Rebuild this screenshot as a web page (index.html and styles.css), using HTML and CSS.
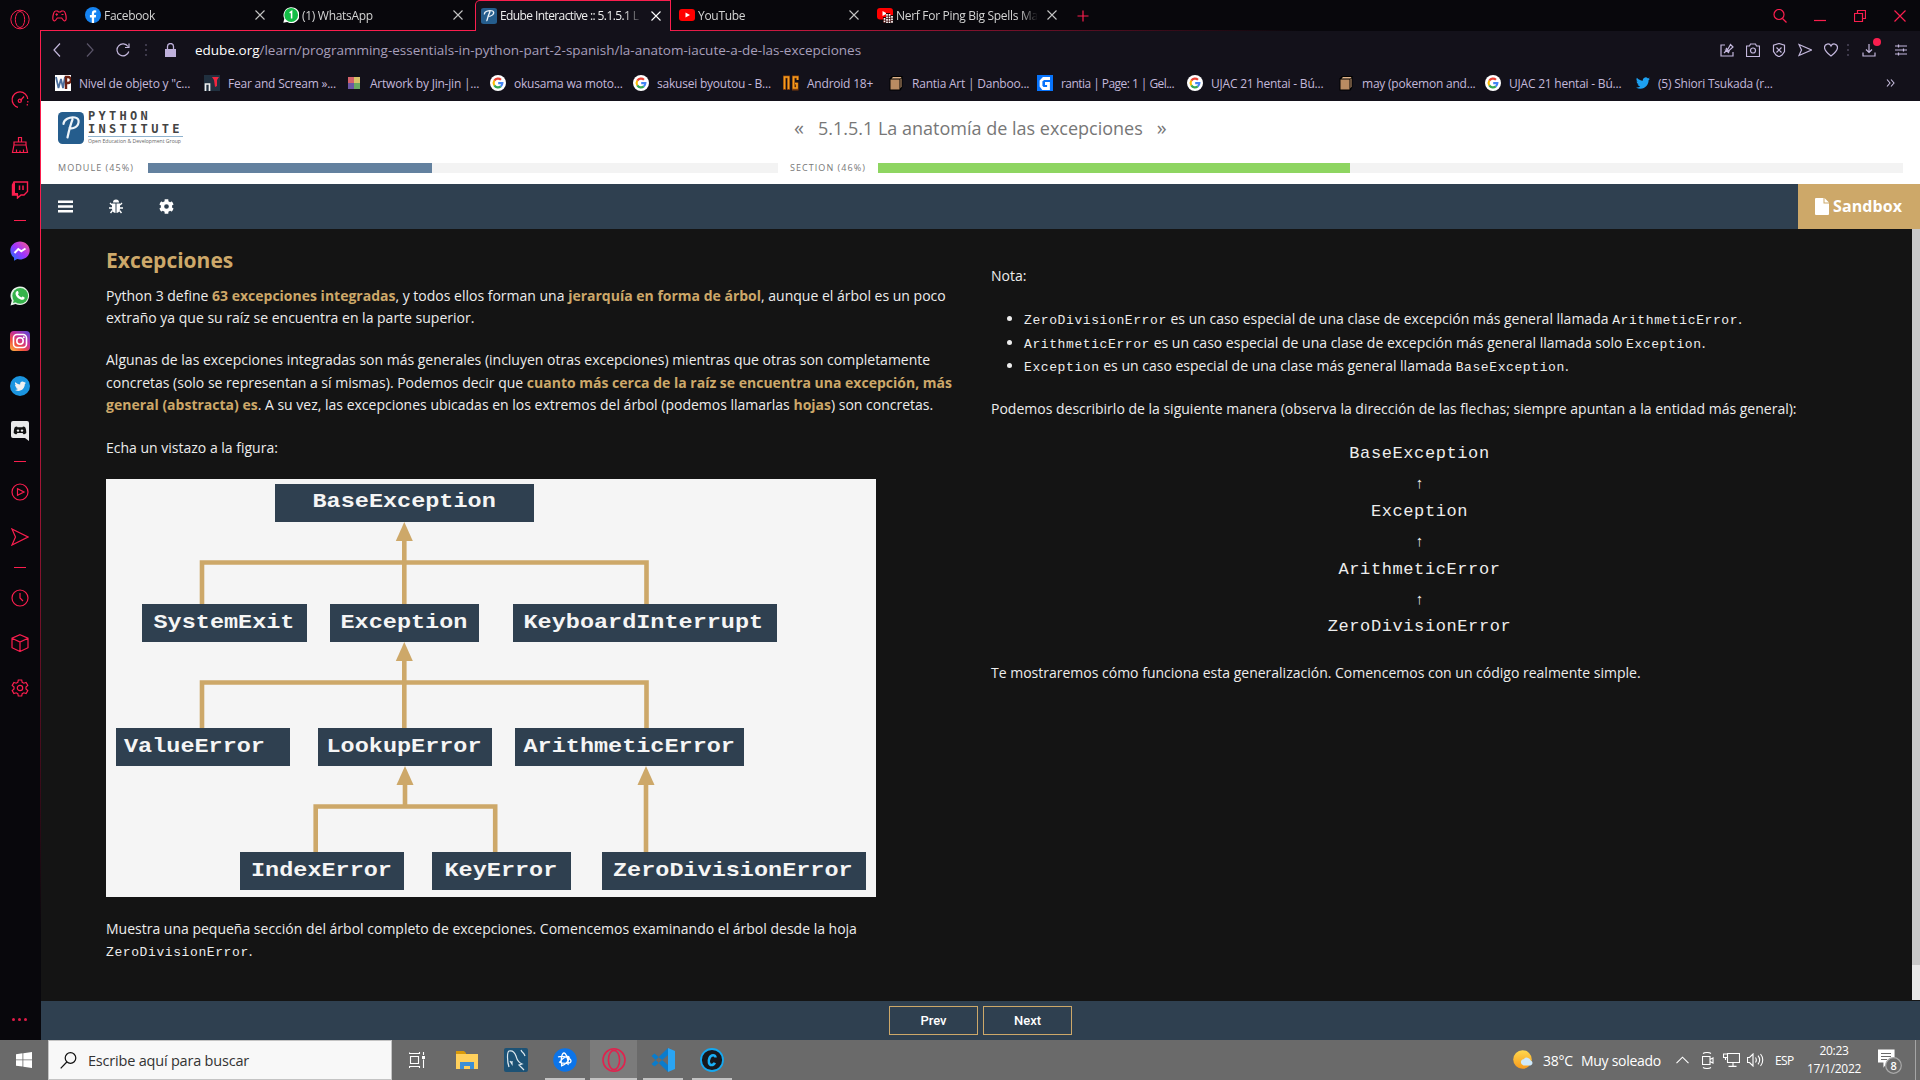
FILE: index.html
```html
<!DOCTYPE html>
<html lang="es">
<head>
<meta charset="utf-8">
<title>Edube Interactive :: 5.1.5.1 La anatomía de las excepciones</title>
<link rel="stylesheet" href="styles.css">
</head>
<body>
<svg class="defs" width="0" height="0">
  <symbol id="x" viewBox="0 0 12 12"><path d="M1.5 1.5l9 9M10.5 1.5l-9 9" fill="none" stroke="currentColor" stroke-width="1.1"/></symbol>
  <symbol id="opera" viewBox="0 0 24 24"><ellipse cx="12" cy="12" rx="11" ry="11.2"/><ellipse cx="12" cy="12" rx="5.6" ry="9.6"/></symbol>
  <symbol id="google" viewBox="0 0 16 16"><circle cx="8" cy="8" r="8" fill="#fff"/><g fill="none" stroke-width="2.1"><path d="M4.3 5.6A4.4 4.4 0 0 1 11 4.8" stroke="#ea4335"/><path d="M4.3 10.4a4.6 4.6 0 0 1 0-4.8" stroke="#fbbc05"/><path d="M4.3 10.4a4.4 4.4 0 0 0 6.5 1" stroke="#34a853"/><path d="M8.2 8.1h4.2a4.4 4.4 0 0 1-1.6 3.3" stroke="#4285f4"/></g></symbol>
  <symbol id="box" viewBox="0 0 16 16"><path d="M1.500 3.500L4 1h10.500v11l-2 3.500h-11z" fill="#000"/><path d="M3.500 3.500L5 2h8.500L12.500 3.500z" fill="#e0b48a"/><path d="M2.500 4.500h9v10h-9z" fill="#b98b62"/><path d="M12.500 4.500l1-1.300v8.600l-1 1.500z" fill="#cfa076"/></symbol>
  <symbol id="bird" viewBox="0 0 24 24"><path d="M23.950 4.570a10 10 0 0 1-2.820.770 4.960 4.960 0 0 0 2.160-2.720c-.950.550-2 .950-3.130 1.180a4.920 4.920 0 0 0-8.380 4.480C7.690 8.090 4.070 6.130 1.640 3.160a4.900 4.900 0 0 0 1.520 6.570 4.900 4.900 0 0 1-2.230-.610v.060a4.920 4.920 0 0 0 3.950 4.830 5 5 0 0 1-2.210.080 4.940 4.940 0 0 0 4.600 3.420A9.870 9.870 0 0 1 0 19.540a14 14 0 0 0 7.550 2.210c9.050 0 14-7.500 14-13.980 0-.210 0-.420-.020-.630a9.900 9.900 0 0 0 2.420-2.570z"/></symbol>
  <symbol id="gear" viewBox="0 0 512 512"><path d="M487 316l-43-25c4-23 4-47 0-70l43-25c5-3 7-9 6-14-11-36-30-69-55-96-4-4-10-5-15-2l-43 24a190 190 0 0 0-60-34V24c0-6-4-10-9-12a245 245 0 0 0-111 0c-5 2-9 6-9 12v50c-22 8-43 20-60 34L88 84c-5-3-11-2-15 2-25 27-44 60-55 96-2 5 1 11 5 14l43 25c-4 23-4 47 0 70l-43 25c-4 3-7 9-5 14 11 36 30 69 55 96 4 4 10 5 15 2l43-24c17 14 38 26 60 34v50c0 6 4 10 9 12 36 8 74 8 111 0 5-2 9-6 9-12v-50c22-8 43-20 60-34l43 24c5 3 11 2 15-2 25-27 44-60 55-96 1-5-1-11-6-14zM256 336a80 80 0 1 1 0-160 80 80 0 0 1 0 160z"/></symbol>
  <symbol id="plogo" viewBox="0 0 26 32"><rect width="26" height="32" rx="4.500" fill="#255d8d"/><path d="M5.500 12c0-4.500 6-7.500 11.500-6.500 5.500 1 4.500 8.500-1.500 10.500-1.500.500-3 .500-4 0M14.500 7.500c-2 5-3.500 11-5 18" fill="none" stroke="#eef4f9" stroke-width="2.200" stroke-linecap="round"/></symbol>
  <symbol id="yt" viewBox="0 0 16 16"><rect y="2" width="16" height="12" rx="3" fill="#f00"/><path d="M6.500 5.500v5L11 8z" fill="#fff"/></symbol>
</svg>

<div class="desktop">
  <div class="browser">
    <nav class="side">
      <div class="s-logo"><svg class="ln" width="20" height="21"><use href="#opera"/></svg></div>
      <div class="s-list">
        <div class="s-it"><svg class="ln" width="18" height="18" viewBox="0 0 18 18"><path d="M7 16.300A7.800 7.800 0 1 1 16.700 8M16.800 10v1.500M16.300 13v1.500M9.500 9.500L13 5.500"/><circle cx="8.800" cy="9.700" r="1.600"/></svg></div>
        <div class="s-it"><svg class="ln" width="18" height="18" viewBox="0 0 18 18"><path d="M7.500 6V1.500h3V6M3 9V6h12v3M3 9L1.500 16.500h15L15 9zM5.500 16.500v-3M9 16.500v-2M12.500 16.500v-3"/></svg></div>
        <div class="s-it"><svg width="18" height="18" viewBox="0 0 18 18"><path d="M3 1h13.500v9.500L13 14h-3l-3.500 3v-3H1.500V4z" fill="none" stroke="#fa1e4e" stroke-width="1.400"/><path d="M1 4l3-3v11h3v2l-1 3v-3H1z" fill="#fa1e4e"/><path d="M8.500 4.500V9M12 4.500V9" stroke="#fa1e4e" stroke-width="1.500"/></svg></div>
        <div class="s-dash"></div>
        <div class="s-it"><svg width="20" height="20" viewBox="0 0 20 20"><defs><linearGradient id="ms" x1="0" y1="1" x2="1" y2="0"><stop offset="0" stop-color="#0a7cff"/><stop offset=".5" stop-color="#a033ff"/><stop offset="1" stop-color="#ff5c87"/></linearGradient></defs><path d="M10 .500c5.500 0 9.700 4 9.700 9s-4.200 9-9.700 9c-1 0-2-.100-2.800-.400L4 19.700v-3A8.800 8.800 0 0 1 .300 9.500c0-5 4.200-9 9.700-9z" fill="url(#ms)"/><path d="M4.500 12l3.800-4 3 2.300L15.500 7.500" fill="none" stroke="#fff" stroke-width="2"/></svg></div>
        <div class="s-it"><svg width="20" height="20" viewBox="0 0 20 20"><path d="M.500 19.500l1.300-5A9.300 9.300 0 1 1 5.500 18z" fill="#e8f3ea"/><circle cx="10.200" cy="9.800" r="7.900" fill="#35b34b"/><path d="M3 17l.800-3 2.200 2.200z" fill="#35b34b"/><path d="M6.500 5.500c1-.800 1.600-.300 2 1 .300.800.100 1-.600 1.800 1 1.700 2 2.500 3.500 3.100.900-1 1.100-1.100 1.900-.700 1.300.600 1.600.800 1.200 1.800-.700 1.500-2.500 1.700-4.400.8C7.300 12 6 10 5.600 8.200c-.200-1.200.200-2.100.9-2.700z" fill="#fff"/></svg></div>
        <div class="s-it"><svg width="20" height="20" viewBox="0 0 20 20"><defs><linearGradient id="ig" x1="0" y1="1" x2=".8" y2="0"><stop offset="0" stop-color="#fdc145"/><stop offset=".35" stop-color="#f2503d"/><stop offset=".65" stop-color="#c5309a"/><stop offset="1" stop-color="#6a45cf"/></linearGradient></defs><rect width="20" height="20" rx="4" fill="url(#ig)"/><g fill="none" stroke="#fff" stroke-width="1.600"><rect x="3.500" y="3.500" width="13" height="13" rx="3.500"/><circle cx="10" cy="10" r="3.200"/></g><circle cx="13.800" cy="6.200" r="1" fill="#fff"/></svg></div>
        <div class="s-it"><svg width="20" height="20" viewBox="0 0 20 20"><circle cx="10" cy="10" r="10" fill="#1b95e0"/><use href="#bird" x="4.500" y="4.500" width="11.500" height="11.500" fill="#f1f1f1"/></svg></div>
        <div class="s-it"><svg width="18" height="20" viewBox="0 0 18 20"><path d="M2 0h14a2 2 0 0 1 2 2v18l-4-3H2a2 2 0 0 1-2-2V2a2 2 0 0 1 2-2z" fill="#e9e9ea"/><path d="M6 5.500C4 5.700 3.600 6.300 3.300 7.500c-.500 1.800-.600 3.500-.600 4.500.8 1 1.800 1.300 2.800 1.300l.9-1.300h5.200l.9 1.300c1 0 2-.300 2.800-1.300 0-1-.100-2.700-.6-4.500-.300-1.200-.7-1.800-2.700-2l-.5.800h-5z" fill="#111"/><circle cx="7" cy="9.600" r="1.200" fill="#e9e9ea"/><circle cx="11" cy="9.600" r="1.200" fill="#e9e9ea"/></svg></div>
        <div class="s-dash"></div>
        <div class="s-it"><svg class="ln" width="18" height="18" viewBox="0 0 18 18"><circle cx="9" cy="9" r="8"/><path d="M6.500 5.700v6.600L13 9z"/></svg></div>
        <div class="s-it"><svg class="ln" width="18" height="18" viewBox="0 0 18 18"><path d="M1 1l16 8-16 8 3.500-8z"/></svg></div>
        <div class="s-dash"></div>
        <div class="s-it"><svg class="ln" width="18" height="18" viewBox="0 0 18 18"><circle cx="9" cy="9" r="8"/><path d="M9 4v5l3 3"/></svg></div>
        <div class="s-it"><svg class="ln" width="18" height="18" viewBox="0 0 18 18"><path d="M9 .700l8 3.500v9.500l-8 3.800-8-3.800V4.200zM1 4.200L9 8l8-3.800M9 8v9.500"/></svg></div>
        <div class="s-it"><svg class="ln" width="18" height="18" viewBox="0 0 18 18"><path d="M7.300 1h3.400l.5 2.300 1.600.9 2.300-.800 1.700 3-1.800 1.600v2l1.800 1.600-1.700 3-2.300-.8-1.600.9-.5 2.300H7.300l-.5-2.300-1.600-.9-2.300.8-1.700-3L3 10V8L1.200 6.400l1.700-3 2.300.8 1.600-.9z"/><circle cx="9" cy="9" r="2.700"/></svg></div>
      </div>
      <div class="s-more"><i></i><i></i><i></i></div>
    </nav>

    <div class="main">
      <header class="tabs">
        <div class="gx"><svg class="ln" width="15" height="12" viewBox="0 0 15 12"><path d="M3.500 1h2l1 1h2l1-1h2c1.500 0 2.700 4 2.700 7.500 0 2.500-2 3-3 1.500L9.700 8H5.300l-1.500 2C2.800 11.500.800 11 .800 8.500.800 5 2 1 3.500 1zM3.500 4.500h2.400M4.700 3.300v2.400M9.500 4.500h2"/></svg></div>
        <div class="tab"><svg width="16" height="16" viewBox="0 0 16 16"><circle cx="8" cy="8" r="8" fill="#1583f2"/><path d="M6.800 16v-5.500H4.900V8h1.900V6.400c0-2 1.200-3.100 2.900-3.100l1.500.1v2h-.9c-.9 0-1.200.5-1.200 1.100V8h2l-.3 2.500H9.100V16z" fill="#fff"/></svg><span>Facebook</span><svg class="cl" width="12" height="12"><use href="#x"/></svg></div>
        <div class="tab"><svg width="16" height="16" viewBox="0 0 16 16"><path d="M.3 15.800l1-4A8 8 0 1 1 4.200 15z" fill="#fff"/><circle cx="8.200" cy="8" r="6.900" fill="#13bd46"/><path d="M6.600 5.800L8.600 4.500v7" fill="none" stroke="#fff" stroke-width="1.500"/></svg><span>(1) WhatsApp</span><svg class="cl" width="12" height="12"><use href="#x"/></svg></div>
        <div class="tab active"><svg width="16" height="16" viewBox="0 0 26 32" preserveAspectRatio="none"><use href="#plogo"/></svg><span>Edube Interactive :: 5.1.5.1 L</span><svg class="cl" width="12" height="12"><use href="#x"/></svg></div>
        <div class="tab"><svg width="16" height="16"><use href="#yt"/></svg><span>YouTube</span><svg class="cl" width="12" height="12"><use href="#x"/></svg></div>
        <div class="tab"><svg width="16" height="16" viewBox="0 0 16 16"><rect y="1" width="16" height="11.500" rx="3" fill="#f00"/><path d="M5.500 4v5l4.500-2.500z" fill="#fff"/><path d="M9 6h4v2h3v8H6V10h3z" fill="#300"/><path d="M10 7v9M12.500 7v9M15 9v7M7.500 11v5" stroke="#fff" stroke-width="1.700" stroke-dasharray="1.800 .7"/></svg><span>Nerf For Ping Big Spells Ma</span><svg class="cl" width="12" height="12"><use href="#x"/></svg></div>
        <svg class="plus ln" width="12" height="12" viewBox="0 0 12 12"><path d="M6 .500v11M.500 6h11"/></svg>
        <div class="win">
          <i><svg class="ln" width="14" height="14" viewBox="0 0 14 14"><circle cx="6" cy="5.500" r="5"/><path d="M9.500 9.500l4 4"/></svg></i>
          <i><svg class="ln" width="12" height="12" viewBox="0 0 12 12"><path d="M0 10.500h12"/></svg></i>
          <i><svg class="ln" width="12" height="12" viewBox="0 0 12 12"><path d="M.500 3.500h8v8h-8zM3.500 3V.500h8v8H9"/></svg></i>
          <i><svg class="ln" width="12" height="12" viewBox="0 0 12 12"><path d="M.500.500l11 11M11.500.500l-11 11"/></svg></i>
        </div>
      </header>

      <div class="addr">
        <svg class="a-back" width="8" height="14" viewBox="0 0 8 14"><path d="M7 .500L1 7l6 6.500"/></svg>
        <svg class="a-fwd" width="8" height="14" viewBox="0 0 8 14"><path d="M1 .500L7 7l-6 6.500"/></svg>
        <svg class="a-rel" width="14" height="14" viewBox="0 0 14 14"><path d="M12.800 8.500A6 6 0 1 1 12 3.500M13 .500v4H9"/></svg>
        <b class="dots"></b>
        <svg class="a-lock" width="11" height="14" viewBox="0 0 11 14"><path d="M0 6h11v8H0z" fill="#bfb1dc"/><path d="M2.500 6V3.500a3 3 0 0 1 6 0V6" fill="none" stroke="#bfb1dc" stroke-width="1.300"/></svg>
        <p class="url"><span>edube.org</span>/learn/programming-essentials-in-python-part-2-spanish/la-anatom-iacute-a-de-las-excepciones</p>
        <div class="a-tools">
          <i><svg width="14" height="14" viewBox="0 0 14 14"><path d="M5 2H1v11h12V9M4 10l3-3M6 5l3 3.500M5.500 7L8 6l2.500-4.500L13 4 9.500 7l-1 2.500z"/></svg></i>
          <i><svg width="14" height="14" viewBox="0 0 14 14"><path d="M.500 3h3l1-2h5l1 2h3v10.500H.500z"/><circle cx="7" cy="7.500" r="2.500"/></svg></i>
          <i><svg width="14" height="14" viewBox="0 0 14 14"><path d="M7 .500l5.500 1.700v6.300L10 12l-3 1.800L4 12 1.500 8.500V2.200zM4.500 4.500l5 5M9.500 4.500l-5 5"/></svg></i>
          <i><svg width="14" height="14" viewBox="0 0 14 14"><path d="M1 1.500L13.500 7 1 12.500 3.500 7z"/></svg></i>
          <i><svg width="14" height="14" viewBox="0 0 14 14"><path d="M7 13C2.500 9.500.500 7 .500 4.500.500 .500 5.500-.200 7 3 8.500-.200 13.500.500 13.500 4.500 13.500 7 11.500 9.500 7 13z"/></svg></i>
          <b class="dots"></b>
          <i class="dl"><svg width="14" height="14" viewBox="0 0 14 14"><path d="M1 9.500v3.500h12V9.500M7 1v8.500M4 6.500l3 3 3-3"/></svg></i>
          <i class="st"><svg width="12" height="14" viewBox="0 0 12 14"><path d="M0 3h12M0 7h12M0 11h12M3.500 1.500v3M8.500 5.500v3M3.500 9.500v3"/></svg></i>
        </div>
      </div>

      <div class="marks">
        <div><svg width="16" height="16" viewBox="0 0 16 16"><rect width="16" height="16" fill="#fff"/><path d="M1 2l2.500 11L6 4l2 9 2-11" fill="none" stroke="#4a6d9c" stroke-width="1.800"/><path d="M11 14V2h2a2.500 2.500 0 0 1 0 6h-2" fill="none" stroke="#6b1f10" stroke-width="2.400"/></svg><span>Nivel de objeto y "c...</span></div>
        <div><svg width="16" height="16" viewBox="0 0 16 16"><rect width="16" height="16" fill="#20303f"/><path d="M1.500 16V9h4v7" fill="none" stroke="#eee" stroke-width="1.700"/><path d="M8 2h7l-2 3v6l-2 1-1-7z" fill="#f0263f"/></svg><span>Fear and Scream »...</span></div>
        <div><svg width="12" height="12" viewBox="0 0 12 12"><path d="M0 0h6v6H0z" fill="#d4616a"/><path d="M6 0h6v6H6z" fill="#d8c268"/><path d="M0 6h6v6H0z" fill="#6b57a5"/><path d="M6 6h6v6H6z" fill="#69ab63"/></svg><span class="art">Artwork by Jin-jin |...</span></div>
        <div><svg width="16" height="16"><use href="#google"/></svg><span>okusama wa moto...</span></div>
        <div><svg width="16" height="16"><use href="#google"/></svg><span>sakusei byoutou - B...</span></div>
        <div><svg width="16" height="16" viewBox="0 0 16 16"><path d="M1.500 15V2h4v13M15 5V2h-4.500v12H14V9h-2" fill="none" stroke="#7a3b0d" stroke-width="3"/><path d="M1.500 14V2h4v12M14.500 5V2h-4v11H14V8.500h-2" fill="none" stroke="#f79b1c" stroke-width="1.700"/></svg><span>Android 18+</span></div>
        <div><svg width="16" height="16"><use href="#box"/></svg><span>Rantia Art | Danboo...</span></div>
        <div><svg width="16" height="16" viewBox="0 0 16 16"><rect width="16" height="16" fill="#0773fb"/><path d="M13 3.500H6.500L4 6v5l2 2.500h5.500v-5H8" fill="none" stroke="#fff" stroke-width="2.800"/></svg><span class="tight">rantia | Page: 1 | Gel...</span></div>
        <div><svg width="16" height="16"><use href="#google"/></svg><span>UJAC 21 hentai - Bú...</span></div>
        <div><svg width="16" height="16"><use href="#box"/></svg><span>may (pokemon and...</span></div>
        <div><svg width="16" height="16"><use href="#google"/></svg><span>UJAC 21 hentai - Bú...</span></div>
        <div><svg width="14" height="14"><use href="#bird" fill="#1da1f2"/></svg><span>(5) Shiori Tsukada (r...</span></div>
        <em><svg width="9" height="8" viewBox="0 0 9 8"><path d="M1 .500L4 4 1 7.500M5 .500L8 4 5 7.500" fill="none" stroke="#c9bfe0" stroke-width="1.100"/></svg></em>
      </div>

      <section class="page">
        <div class="head">
          <div class="brand">
            <svg width="26" height="32"><use href="#plogo"/></svg>
            <div class="b-txt"><b>PYTHON</b><b class="b2">INSTITUTE</b><hr><svg width="95" height="8"><text x="0" y="6" textLength="93" lengthAdjust="spacingAndGlyphs">Open Education &amp; Development Group</text></svg></div>
          </div>
          <h1><i>«</i><span>5.1.5.1 La anatomía de las excepciones</span><i>»</i></h1>
        </div>
        <div class="prog">
          <label>MODULE (45%)</label><div class="bar b-mod"><div style="width:45%"></div></div>
          <label>SECTION (46%)</label><div class="bar b-sec"><div style="width:46%"></div></div>
        </div>
        <div class="nav">
          <svg width="15" height="13" viewBox="0 0 15 13"><path d="M0 .500h15v2.600H0zM0 5.200h15v2.600H0zM0 9.900h15v2.600H0z" fill="#fff"/></svg>
          <svg width="16" height="16" viewBox="0 0 16 16"><path d="M5 3.500a3 3 0 0 1 6 0z" fill="#fff"/><path d="M4 4.500h3.500V14C5 13.800 4 12 4 9.500zM8.500 4.500H12v5c0 2.500-1 4.300-3.500 4.500z" fill="#fff"/><path d="M4 6L2 4M12 6l2-2M4 9H1M12 9h3M4.500 11.500L2.500 14M11.500 11.500l2 2.500" stroke="#fff" stroke-width="1.400"/></svg>
          <svg width="15" height="15"><use href="#gear" fill="#fff"/></svg>
          <div class="sand"><svg width="14" height="17" viewBox="0 0 14 17"><path d="M0 1a1 1 0 0 1 1-1h7.500v5.500H14V16a1 1 0 0 1-1 1H1a1 1 0 0 1-1-1zM9.500 0L14 4.500H9.500z" fill="#fff"/></svg><b>Sandbox</b></div>
        </div>

        <div class="content">
          <article class="left">
            <h2>Excepciones</h2>
            <p>Python 3 define <strong>63 excepciones integradas</strong>, y todos ellos forman una <strong>jerarquía en forma de árbol</strong>, aunque el árbol es un poco<br>extraño ya que su raíz se encuentra en la parte superior.</p>
            <p>Algunas de las excepciones integradas son más generales (incluyen otras excepciones) mientras que otras son completamente<br>concretas (solo se representan a sí mismas). Podemos decir que <strong>cuanto más cerca de la raíz se encuentra una excepción, más<br>general (abstracta) es</strong>. A su vez, las excepciones ubicadas en los extremos del árbol (podemos llamarlas <strong>hojas</strong>) son concretas.</p>
            <p>Echa un vistazo a la figura:</p>
            <svg class="fig" width="770" height="418" viewBox="106 479 770 418">
              <rect x="106" y="479" width="770" height="418" fill="#f5f5f5"/>
              <g fill="none" stroke="#cda869" stroke-width="4.600">
                <path d="M202 606v-43.500h444.500V606M404.300 606v-68"/>
                <path d="M202 730v-47.500h444.500V730M404.300 730v-72"/>
                <path d="M315.700 854v-47.500h179.500V854M405 806v-24M646 854v-72"/>
              </g>
              <g fill="#cda869"><path d="M404.300 522l8.500 19h-17z"/><path d="M404.300 642l8.500 19h-17z"/><path d="M405 766l8.500 19h-17z"/><path d="M646 766l8.500 19h-17z"/></g>
              <g fill="#2f4050">
                <rect x="275" y="484" width="259" height="38"/>
                <rect x="142" y="604" width="165" height="38"/><rect x="330" y="604" width="149" height="38"/><rect x="513" y="604" width="264" height="38"/>
                <rect x="116" y="728" width="174" height="38"/><rect x="318" y="728" width="174" height="38"/><rect x="515" y="728" width="229" height="38"/>
                <rect x="240" y="852" width="164" height="38"/><rect x="432" y="852" width="139" height="38"/><rect x="602" y="852" width="264" height="38"/>
              </g>
              <g class="nodes">
                <text transform="translate(312.500 507) scale(1 .88)">BaseException</text>
                <text transform="translate(153.500 627.500) scale(1 .88)">SystemExit</text>
                <text transform="translate(340.500 627.500) scale(1 .88)">Exception</text>
                <text transform="translate(523.500 627.500) scale(1 .88)">KeyboardInterrupt</text>
                <text transform="translate(124 751.500) scale(1 .88)">ValueError</text>
                <text transform="translate(326.500 751.500) scale(1 .88)">LookupError</text>
                <text transform="translate(523.500 751.500) scale(1 .88)">ArithmeticError</text>
                <text transform="translate(251 876) scale(1 .88)">IndexError</text>
                <text transform="translate(444.500 876) scale(1 .88)">KeyError</text>
                <text transform="translate(613 876) scale(1 .88)">ZeroDivisionError</text>
              </g>
            </svg>
            <p>Muestra una pequeña sección del árbol completo de excepciones. Comencemos examinando el árbol desde la hoja<br><code>ZeroDivisionError</code>.</p>
          </article>
          <article class="right">
            <p>Nota:</p>
            <ul>
              <li><code>ZeroDivisionError</code> es un caso especial de una clase de excepción más general llamada <code>ArithmeticError</code>.</li>
              <li><code>ArithmeticError</code> es un caso especial de una clase de excepción más general llamada solo <code>Exception</code>.</li>
              <li><code>Exception</code> es un caso especial de una clase más general llamada <code>BaseException</code>.</li>
            </ul>
            <p>Podemos describirlo de la siguiente manera (observa la dirección de las flechas; siempre apuntan a la entidad más general):</p>
            <div class="chain">
              <code>BaseException</code><span>↑</span><code>Exception</code><span>↑</span><code>ArithmeticError</code><span>↑</span><code>ZeroDivisionError</code>
            </div>
            <p>Te mostraremos cómo funciona esta generalización. Comencemos con un código realmente simple.</p>
          </article>
          <div class="scroll"><div></div></div>
        </div>
        <div class="foot"><button>Prev</button><button>Next</button></div>
      </section>
    </div>
  </div>

  <footer class="task">
    <div class="start"><svg width="16" height="16" viewBox="0 0 16 16"><path d="M0 2.200l6.500-.9v6.200H0zM7.300 1.200L16 0v7.500H7.300zM0 8.300h6.500v6.300L0 13.700zM7.300 8.300H16V16l-8.700-1.300z" fill="#fff"/></svg></div>
    <div class="search"><svg width="17" height="17" viewBox="0 0 17 17"><circle cx="10.500" cy="6" r="5.300"/><path d="M6.800 10L.700 16.300"/></svg><span>Escribe aquí para buscar</span></div>
    <div class="apps">
      <i><svg width="17" height="16" viewBox="0 0 17 16"><path d="M.500 2V.500M.500 1.500h10V0M.500 16v-1.500h10V16M1.500 4.500h8v7h-8zM14.500 0v3M14.500 7.500V16" fill="none" stroke="#fff" stroke-width="1.100"/><rect x="13" y="4" width="3" height="3" fill="#fff"/></svg></i>
      <i><svg width="22" height="18" viewBox="0 0 22 18"><path d="M0 0h8l2 2v3H0z" fill="#d99a0a"/><path d="M0 3h22v15H0z" fill="#ffd05c"/><path d="M4 11h14v7h-4v-3H8v3H4z" fill="#3b8fd6"/></svg></i>
      <i><svg width="24" height="24" viewBox="0 0 24 24"><rect width="24" height="24" rx="2" fill="#1d5275"/><path d="M5 19C3 13 3 4 5 3c4-1 6 2 7 5s1 6 6 8l-3 1 5 5M17 2c1 3 3 2 4 6M6 13l2 3v-3" fill="none" stroke="#dfe9ef" stroke-width="1.200"/></svg></i>
      <i class="on"><svg width="24" height="24" viewBox="0 0 24 24"><circle cx="12" cy="12" r="11.800" fill="#0c74e8"/><g fill="none" stroke="#fff" stroke-width="1.300"><path d="M9 18C7 12 9 5 11 5s5 8 4 12M5 9c5-2 13 1 13 4s-8 3-12 1M8 18c5-1 9-7 8-9s-7 1-9 5"/></g></svg></i>
      <i class="on cur"><svg width="24" height="24" fill="none" stroke="#e0234e" stroke-width="1.600"><use href="#opera"/></svg></i>
      <i class="on"><svg width="24" height="24" viewBox="0 0 24 24"><path d="M17 0l7 3v18l-7 3z" fill="#2aa5f5"/><path d="M17 0v7L3.500 18.500.500 16zM17 24v-7L3.500 5.500.500 8z" fill="#0a7ccc"/></svg></i>
      <i class="on"><svg width="24" height="24" viewBox="0 0 24 24"><circle cx="12" cy="12" r="11" fill="#16181c" stroke="#16a8f0" stroke-width="1.800"/><path d="M15.500 9.500c0-3-4.500-3-6 .5s-.5 7 2 7c1.700 0 2.800-1 3.300-2.300" fill="none" stroke="#1bb0f5" stroke-width="2.600"/></svg></i>
    </div>
    <div class="tray">
      <svg class="t-sun" width="20" height="20" viewBox="0 0 20 20"><defs><linearGradient id="sn" x1="0" y1="0" x2="0" y2="1"><stop offset="0" stop-color="#ffd84d"/><stop offset="1" stop-color="#f79a1c"/></linearGradient></defs><circle cx="9.500" cy="9.500" r="9.300" fill="url(#sn)"/><path d="M10.500 15.500a3.200 3.200 0 0 1 0-6.300 4.200 4.200 0 0 1 7.300 1.300 2.600 2.600 0 0 1-.3 5z" fill="#cfe9fb"/></svg>
      <span class="t-deg">38°C</span><span class="t-sol">Muy soleado</span>
      <svg class="t-chev" width="13" height="8" viewBox="0 0 13 8"><path d="M.500 7.200l6-6 6 6"/></svg>
      <svg class="t-cam" width="12" height="17" viewBox="0 0 12 17"><path d="M1 1.500c2-1.300 6-1.300 8 0M1 15.500c2 1.300 6 1.300 8 0M.500 4.500h7.500v8H.500zM8 7.500l3-1.500v5L8 9.500"/></svg>
      <svg class="t-net" width="17" height="14" viewBox="0 0 17 14"><path d="M4.500 2.500V.500H16.500v9h-12V5M10 9.500V13M5.500 13.400h8M.500 1h4v3.500h-4zM2.500 4.500V7"/></svg>
      <svg class="t-vol" width="17" height="14" viewBox="0 0 17 14"><path d="M.500 4.500h2L6 1v12L2.500 9.500h-2zM8.500 4.500c1 1.500 1 3.500 0 5M11 2.700c2 2.500 2 6 0 8.600M13.500 1c3 3.500 3 8.500 0 12"/></svg>
      <span class="t-esp">ESP</span>
      <div class="clock"><span>20:23</span><span>17/1/2022</span></div>
      <svg class="t-not" width="26" height="26" viewBox="0 0 26 26"><path d="M0 1h16v12H9l-3 4v-4H0z" fill="#fff"/><path d="M3 4.500h10M3 7.500h10M3 10.500h6" stroke="#6a6a6a"/><circle cx="15.500" cy="16.500" r="7.800" fill="#6b6b6b" stroke="#a9a9a9" stroke-width="1.200"/><text x="12.500" y="20.500">8</text></svg>
      <div class="peek"></div>
    </div>
  </footer>
</div>
</body>
</html>
```
FILE: styles.css
```css
* { box-sizing: border-box; }
html, body { margin: 0; height: 100%; overflow: hidden; background: #141414; }
body { font-family: "Open Sans", "Noto Sans", sans-serif; }
i, em { font-style: normal; }
svg { display: block; flex: none; }
.defs { position: absolute; }
.ln { fill: none; stroke: #fa1e4e; stroke-width: 1.2; }

.desktop { width: 1920px; height: 1080px; display: flex; flex-direction: column; }
.browser { flex: 1; display: flex; min-height: 0; }

/* Opera sidebar */
.side { width: 41px; background: linear-gradient(#fa1e4e 200px, #fa1e4e00 900px) 100% 30px / 1px 1010px no-repeat, #08070c; display: flex; flex-direction: column; padding-top: 9px; }
.s-logo { height: 68px; display: flex; justify-content: center; align-items: flex-start; padding-right: 2px; }
.s-list { flex: 1; }
.s-it, .s-dash { height: 45px; display: flex; align-items: center; justify-content: center; padding-right: 1px; }
.s-dash { height: 16px; }
.s-dash::before { content: ""; width: 12px; height: 1px; background: #fa1e4e; }
.s-more { height: 41px; display: flex; gap: 3px; padding-left: 12px; align-items: center; }
.s-more i { width: 3px; height: 3px; border-radius: 50%; background: #e01b47; }

.main { flex: 1; min-width: 0; display: flex; flex-direction: column; }

/* Tab strip */
.tabs { height: 31px; display: flex; align-items: center; background: linear-gradient(90deg, #fa1e4e 600px, #fa1e4e00 1260px) 0 100% / 100% 1px no-repeat, #08070c; margin-left: -1px; }
.gx { width: 37px; padding-left: 12px; }
.tab { width: 198px; height: 30px; display: flex; align-items: center; gap: 3px; padding: 0 9px 1px 8px; color: #d4d4d4; font-size: 12px; letter-spacing: -.3px; }
.tab span { flex: 1; min-width: 0; overflow: hidden; white-space: nowrap; margin-right: 5px; -webkit-mask-image: linear-gradient(90deg, #000 calc(100% - 18px), transparent); mask-image: linear-gradient(90deg, #000 calc(100% - 18px), transparent); }
.tab .cl { color: #c4c4c4; }
.tab.active { height: 31px; width: 196px; margin-left: 2px; padding: 0 8px 1px 5px; border: 1px solid #fa1e4e; border-bottom: 0; border-top-left-radius: 5px; background: #13111a; color: #eee; letter-spacing: -.6px; }
.tab.active .cl { color: #fff; }
.plus { margin-left: 10px; }
.win { margin-left: auto; display: flex; }
.win i { width: 40px; height: 30px; display: flex; align-items: center; justify-content: center; }

/* Address bar */
.addr, .marks { background: #13111a; }
.addr { height: 38px; display: flex; align-items: center; padding: 0 3px 0 12px; }
.addr svg { fill: none; stroke: #c4b8dd; stroke-width: 1.2; }
.a-fwd { margin-left: 25px; opacity: .4; }
.a-rel { margin-left: 22px; }
.dots { width: 2px; height: 12px; margin-left: 15px; background: repeating-linear-gradient(#3d394a 0 2px, transparent 2px 5px); }
.addr .a-lock { margin-left: 18px; stroke: none; }
.url { margin: 0 0 0 19px; font-size: 13.5px; color: #a79fba; white-space: nowrap; }
.url span { color: #fff; }
.a-tools { margin-left: auto; display: flex; align-items: center; }
.a-tools i { width: 26px; height: 30px; display: flex; align-items: center; justify-content: center; position: relative; }
.a-tools .dots { margin: 0 3px; }
.a-tools .dl { width: 33px; }
.a-tools .st { width: 32px; }
.dl::after { content: ""; position: absolute; left: 21px; top: 3px; width: 8px; height: 8px; border-radius: 50%; background: #fa1e4e; }

/* Bookmarks */
.marks { height: 32px; display: grid; grid-template-columns: 149px 144px 142px 143px 150px 105px 149px 150px 151px 147px 151px 1fr 25px; align-items: center; padding: 0 9px 4px 14px; color: #c3b8da; font-size: 12px; letter-spacing: -.22px; }
.marks div { display: flex; align-items: center; gap: 8px; white-space: nowrap; }
.marks .art { margin-left: 2px; }
.marks .tight { letter-spacing: -.55px; }

/* Course page */
.page { flex: 1; min-height: 0; display: flex; flex-direction: column; }
.head { height: 56px; background: #fff; display: grid; grid-template-columns: 701px 1fr; align-items: center; padding-left: 17px; }
.brand { display: flex; gap: 4px; height: 34px; align-items: flex-start; }
.b-txt { width: 95px; color: #444; }
.b-txt b { display: block; font: 700 12px/13px "DejaVu Sans Mono", monospace; letter-spacing: 3.3px; margin-top: -2px; height: 12px; white-space: nowrap; }
.b-txt b.b2 { margin-top: 1px; height: 13px; }
.b-txt hr { margin: 0; border: 0; height: 1px; background: #8fb3cf; }
.b-txt text { font-size: 5px; fill: #666; }
h1 { margin: 0 0 3px; display: flex; align-items: center; gap: 14px; font-size: 18px; font-weight: 400; color: #777; padding-left: 35px; white-space: nowrap; line-height: 24px; }
h1 i { font-size: 20px; }
.prog { height: 27px; background: #fff; display: flex; padding: 5px 17px 0; }
.prog label { width: 90px; font-size: 9px; line-height: 12px; letter-spacing: 1.05px; color: #777; white-space: nowrap; }
.bar { height: 10px; background: #f3f3f3; margin-top: 1px; }
.bar div { height: 10px; }
.b-mod { width: 630px; margin-right: 12px; }
.b-mod div { background: #63819f; }
.b-mod + label { width: 88px; }
.b-sec { width: 1025px; }
.b-sec div { background: #8ed561; }
.nav { height: 45px; background: #2f4050; display: flex; align-items: center; padding-left: 17px; gap: 35px; }
.sand { margin-left: auto; width: 122px; height: 45px; background: #cda869; color: #fff; display: flex; align-items: center; padding: 0 0 1px 17px; gap: 4px; font-size: 16px; letter-spacing: .1px; }

.content { flex: 1; min-height: 0; background: #141414; color: #ededed; display: grid; grid-template-columns: 885px 857px 1fr 8px; font-size: 14px; line-height: 22.4px; white-space: nowrap; padding-left: 65px; }
.left { padding-top: 17px; }
h2 { margin: 0 0 10.5px; font-size: 21px; line-height: 28px; color: #cda869; font-weight: 700; }
strong { color: #cda869; font-weight: 700; }
.content p { margin: 0 0 20px; }
.fig { margin-bottom: 21px; }
.nodes text { font: 700 23.5px "Liberation Mono", monospace; fill: #f5f5f5; }
code { font-family: "Courier New", "Liberation Mono", monospace; font-size: 13px; letter-spacing: .6px; line-height: 1; }
.right { padding-top: 36px; }
.right ul { margin: 0 0 20px; padding-left: 33px; }
.right li { line-height: 23.5px; }
.chain { display: flex; flex-direction: column; align-items: center; margin-bottom: 22px; padding-top: 1px; }
.chain code { font-size: 17px; letter-spacing: .6px; line-height: 26px; }
.chain span { font-family: "Liberation Sans", sans-serif; font-size: 15px; line-height: 31.7px; }
.scroll { grid-column: 4; background: #e9e9e9; border-bottom: 1px solid #141414; }
.scroll div { height: 736px; background: #c9c9c9; }
.foot { height: 39px; background: #2f4050; display: flex; justify-content: center; align-items: center; gap: 5px; }
.foot button { width: 89px; height: 29px; border: 1px solid #cda869; background: none; color: #fff; font: 500 13px Roboto, sans-serif; padding: 0; }

/* Taskbar */
.task { height: 40px; background: #6a6a6a; display: flex; align-items: stretch; color: #fff; }
.start { width: 48px; display: flex; align-items: center; padding-left: 16px; }
.search { width: 344px; background: #f8f8f8; border: 1px solid #c4c4c4; display: flex; align-items: center; padding-left: 11px; gap: 11px; color: #333; font-size: 14.500px; letter-spacing: -.2px; white-space: nowrap; }
.search svg { fill: none; stroke: #111; stroke-width: 1.2; }
.apps { display: flex; padding-left: 1px; }
.apps i { width: 40px; margin: 0 4.6px; display: flex; align-items: center; justify-content: center; }
.apps i.on { border-bottom: 2px solid #c3c3c3; padding-top: 2px; }
.apps i.cur { width: 47px; margin: 0 .6px; background: #7b7b7b; }
.tray { margin-left: auto; display: flex; align-items: center; font-size: 14px; letter-spacing: -.28px; white-space: nowrap; }
.tray svg { fill: none; stroke: #fff; stroke-width: 1.1; }
.tray .t-sun { stroke: none; }
.t-deg { width: 28px; margin-left: 10px; }
.t-sol { width: 85px; margin-left: 10px; }
.t-chev { margin-left: 10px; }
.t-cam { margin-left: 13px; }
.t-net { margin-left: 9px; }
.t-vol { margin-left: 7px; }
.t-esp { font-size: 12px; width: 20px; margin-left: 11px; letter-spacing: -.6px; }
.clock { width: 70px; margin-left: 4px; display: flex; flex-direction: column; align-items: center; font-size: 12px; line-height: 18px; letter-spacing: -.3px; margin-right: 9px; }
.t-not { margin-top: 4px; }
.t-not text { font-size: 11px; fill: #fff; stroke: none; font-weight: 600; }
.peek { width: 5px; height: 40px; border-left: 1px solid #a5a5a5; margin-left: 11px; }
```
